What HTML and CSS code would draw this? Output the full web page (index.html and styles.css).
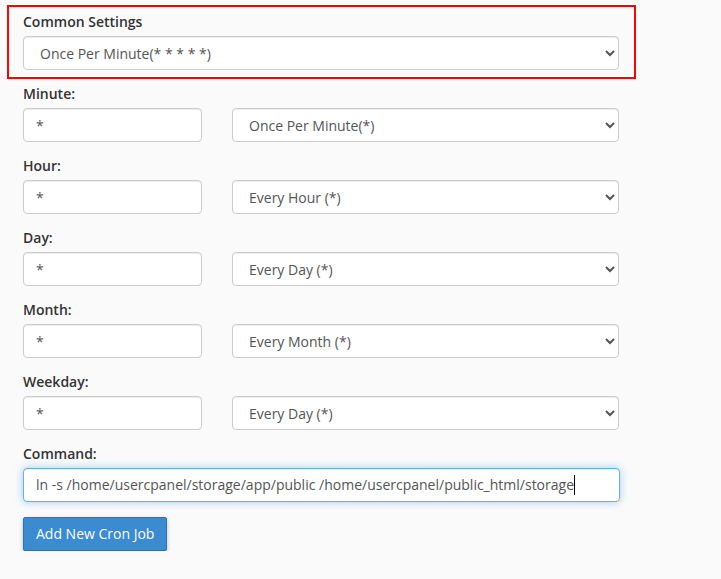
FILE: index.html
```html
<!DOCTYPE html>
<html lang="en">
<head>
<meta charset="utf-8">
<title>Add New Cron Job</title>
<link rel="stylesheet" href="styles.css">
</head>
<body>
<div class="page">
  <div class="common-box">
    <label class="lbl" for="common">Common Settings</label>
    <select id="common" class="ctl sel wide">
      <option>Once Per Minute(* * * * *)</option>
    </select>
  </div>

  <div class="fields">
    <div class="group">
      <label class="lbl" for="min">Minute:</label>
      <div class="pair">
        <input id="min" class="ctl txt" type="text" value="*">
        <select class="ctl sel"><option>Once Per Minute(*)</option></select>
      </div>
    </div>
    <div class="group">
      <label class="lbl" for="hour">Hour:</label>
      <div class="pair">
        <input id="hour" class="ctl txt" type="text" value="*">
        <select class="ctl sel"><option>Every Hour (*)</option></select>
      </div>
    </div>
    <div class="group">
      <label class="lbl" for="day">Day:</label>
      <div class="pair">
        <input id="day" class="ctl txt" type="text" value="*">
        <select class="ctl sel"><option>Every Day (*)</option></select>
      </div>
    </div>
    <div class="group">
      <label class="lbl" for="month">Month:</label>
      <div class="pair">
        <input id="month" class="ctl txt" type="text" value="*">
        <select class="ctl sel"><option>Every Month (*)</option></select>
      </div>
    </div>
    <div class="group">
      <label class="lbl" for="wd">Weekday:</label>
      <div class="pair">
        <input id="wd" class="ctl txt" type="text" value="*">
        <select class="ctl sel"><option>Every Day (*)</option></select>
      </div>
    </div>
    <div class="group cmd-group">
      <label class="lbl">Command:</label>
      <div class="ctl cmd"><span>ln -s /home/usercpanel/storage/app/public /home/usercpanel/public_html/storage</span><span class="caret"></span></div>
    </div>
    <div class="actions">
      <button class="btn" type="button">Add New Cron Job</button>
    </div>
  </div>
</div>
</body>
</html>
```
FILE: styles.css
```css
html, body {
  margin: 0;
  padding: 0;
  background: #fafafa;
}
body {
  font-family: "Open Sans", "Noto Sans", sans-serif;
  font-size: 14px;
  line-height: 20px;
  color: #333;
}
.page {
  padding: 5px 0 0 7px;
}
.common-box {
  border: 2px solid #ff0000;
  padding: 4px 0 7px 14px;
  box-sizing: border-box;
  display: flex;
  flex-direction: column;
  width: 629px;
}
.lbl {
  display: block;
  font-weight: 600;
  line-height: 20px;
  padding-top: 1px;
  margin-bottom: 4px;
  color: #333;
}
.ctl {
  box-sizing: border-box;
  height: 34px;
  border: 1px solid #ccc;
  border-radius: 4px;
  background: #fff;
  color: #555;
  font-family: "Open Sans", "Noto Sans", sans-serif;
  font-size: 14px;
  padding: 6px 12px;
  margin: 0;
  box-shadow: inset 0 1px 1px rgba(0,0,0,0.075);
}
.sel {
  width: 387px;
}
.sel.wide {
  width: 596px;
}
.txt {
  width: 179px;
  outline: none;
}
.fields {
  padding: 4px 0 0 16px;
  display: flex;
  flex-direction: column;
}
.group {
  margin-bottom: 13px;
}
.pair {
  display: flex;
  gap: 30px;
}
.cmd-group {
  margin-bottom: 15px;
}
.cmd {
  width: 597px;
  border-color: #66afe9;
  box-shadow: inset 0 1px 1px rgba(0,0,0,0.075), 0 0 8px rgba(102,175,233,0.6);
  display: flex;
  align-items: center;
  white-space: nowrap;
}
.caret {
  display: inline-block;
  width: 1px;
  height: 20px;
  background: #000;
}
.btn {
  align-self: flex-start;
  height: 34px;
  padding: 6px 12px;
  font-family: "Open Sans", "Noto Sans", sans-serif;
  font-size: 14px;
  line-height: 20px;
  color: #fff;
  background: #3a8bd1;
  border: 1px solid #2e73b5;
  border-radius: 2px;
  box-shadow: 0 2px 4px rgba(0,0,0,0.25);
}
.actions {
  display: flex;
}
```
